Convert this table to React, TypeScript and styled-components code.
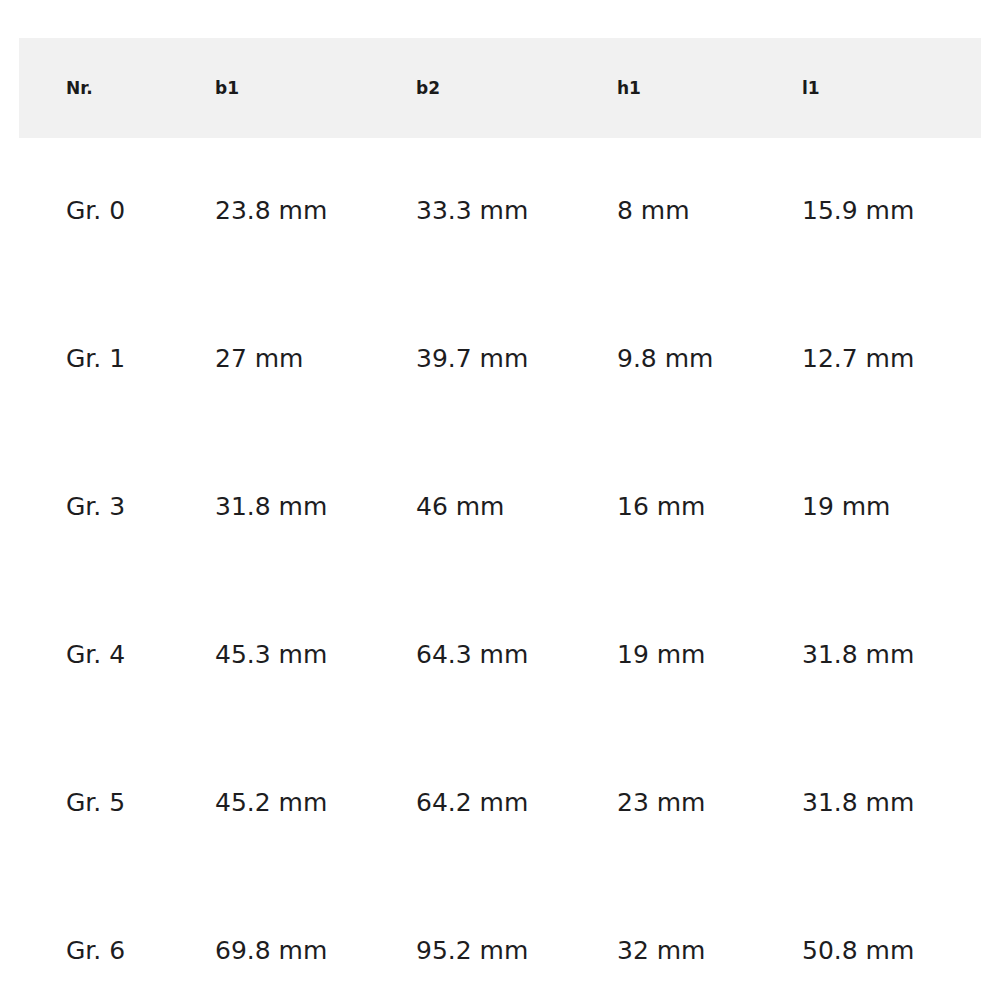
import styled, { createGlobalStyle } from 'styled-components';

const GlobalStyle = createGlobalStyle`
  body {
    margin: 0;
    background: #fff;
    font-family: "DejaVu Sans", Inter, sans-serif;
    color: #1d1d1f;
  }
`;

const Page = styled.div`
  padding: 38px 19px 0;
`;

const Table = styled.div`
  display: flex;
  flex-direction: column;
`;

const Row = styled.div<{ $head?: boolean }>`
  display: grid;
  grid-template-columns: 149px 201px 201px 185px 1fr;
  align-items: center;
  padding-left: 47px;
  height: ${(p) => (p.$head ? '100px' : '148px')};
  background: ${(p) => (p.$head ? '#f1f1f1' : 'transparent')};
`;

const HeadCell = styled.div`
  font-size: 17px;
  font-weight: 700;
  color: #1a1a1a;
`;

const Cell = styled.div`
  font-size: 25px;
  font-weight: 400;
  color: #1d1d1f;
  margin-top: -4px;
`;

const columns = ['Nr.', 'b1', 'b2', 'h1', 'l1'];

const rows = [
  ['Gr. 0', '23.8 mm', '33.3 mm', '8 mm', '15.9 mm'],
  ['Gr. 1', '27 mm', '39.7 mm', '9.8 mm', '12.7 mm'],
  ['Gr. 3', '31.8 mm', '46 mm', '16 mm', '19 mm'],
  ['Gr. 4', '45.3 mm', '64.3 mm', '19 mm', '31.8 mm'],
  ['Gr. 5', '45.2 mm', '64.2 mm', '23 mm', '31.8 mm'],
  ['Gr. 6', '69.8 mm', '95.2 mm', '32 mm', '50.8 mm'],
];

export default function App() {
  return (
    <>
      <GlobalStyle />
      <Page>
        <Table>
          <Row $head>
            {columns.map((c) => (
              <HeadCell key={c}>{c}</HeadCell>
            ))}
          </Row>
          {rows.map((r) => (
            <Row key={r[0]}>
              {r.map((v, i) => (
                <Cell key={i}>{v}</Cell>
              ))}
            </Row>
          ))}
        </Table>
      </Page>
    </>
  );
}
